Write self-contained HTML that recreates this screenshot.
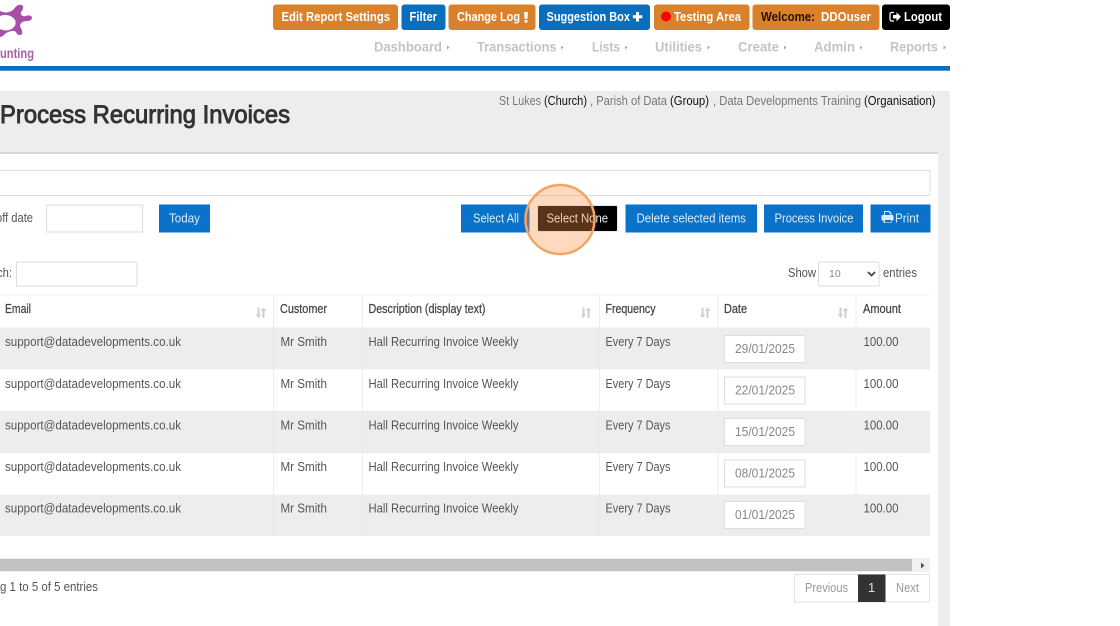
<!DOCTYPE html>
<html lang="en"><head><meta charset="utf-8"><title>Process Recurring Invoices</title>
<style>
html,body{margin:0;padding:0;background:#fff;width:1120px;height:626px;overflow:hidden}
svg{display:block;font-family:"Liberation Sans",sans-serif}
.b{font-weight:700;font-size:12.5px;fill:#fff}
.n{font-weight:700;font-size:14px;fill:#c4c4c4}
.c{font-size:12.5px;fill:#777}
.k{font-size:12.5px;fill:#111}
.w{font-size:13px;fill:#dcecf8}
.t{font-size:13px;fill:#555}
.h{font-size:12.5px;fill:#444;stroke:#444;stroke-width:.25}
.d{font-size:13px;fill:#888}
.s{fill:#cfcfcf}
</style></head><body>
<svg width="1120" height="626" viewBox="0 0 1120 626" xmlns="http://www.w3.org/2000/svg">
<rect width="1120" height="626" fill="#fff"/>
<!-- logo -->
<path fill="#a64fa6" fill-rule="evenodd" d="M0 11C6 14 11 12 14 9C16 6 18 4 22 5C24 7 23 10 21 12C20 15 23 17 26 16C28 15 30 15 32 17C32 20 30 21 27 21C23 21 20 23 20 26C21 29 23 31 22 34C20 36 17 35 16 32C14 30 10 31 6 33C4 35 2 37 0 37ZM0 16C5 14 12 15 15 20C17 24 14 29 9 30C5 31 2 30 0 29Z"/>
<text x="0" y="58" font-size="13.500" font-weight="700" fill="#a860a8" textLength="34" lengthAdjust="spacingAndGlyphs">unting</text>
<!-- top buttons -->
<g>
<rect x="273" y="4.500" width="125" height="25.500" rx="3" fill="#d9822b"/>
<rect x="401.500" y="4.500" width="44" height="25.500" rx="3" fill="#0a6ebd"/>
<rect x="448.500" y="4.500" width="87" height="25.500" rx="3" fill="#d9822b"/>
<rect x="539" y="4.500" width="111" height="25.500" rx="3" fill="#0a6ebd"/>
<rect x="654" y="4.500" width="95.500" height="25.500" rx="3" fill="#d9822b"/>
<rect x="752.500" y="4.500" width="127" height="25.500" rx="3" fill="#d9822b"/>
<rect x="882" y="4.500" width="68" height="25.500" rx="3" fill="#000"/>
<text class="b" x="281.500" y="21" textLength="108.500" lengthAdjust="spacingAndGlyphs">Edit Report Settings</text>
<text class="b" x="409.500" y="21" textLength="27.500" lengthAdjust="spacingAndGlyphs">Filter</text>
<text class="b" x="457" y="21" textLength="63" lengthAdjust="spacingAndGlyphs">Change Log</text>
<path d="M524 12h4l-.6 7h-2.800zM524.600 20h2.800v2.500h-2.800z" fill="#fff"/>
<text class="b" x="546.500" y="21" textLength="83.500" lengthAdjust="spacingAndGlyphs">Suggestion Box</text>
<path d="M637.500 12v9.500M632.800 16.700h9.500" stroke="#fff" stroke-width="3"/>
<circle cx="666" cy="16.500" r="5" fill="#f00"/>
<text class="b" x="674" y="21" textLength="67" lengthAdjust="spacingAndGlyphs">Testing Area</text>
<text class="b" x="761" y="21" textLength="54" lengthAdjust="spacingAndGlyphs" style="fill:#2a1000">Welcome:</text>
<text class="b" x="821" y="21" textLength="50" lengthAdjust="spacingAndGlyphs">DDOuser</text>
<path d="M894 12.500h-2.500a1.500 1.500 0 0 0-1.500 1.500v5.500a1.500 1.500 0 0 0 1.500 1.500h2.500" fill="none" stroke="#fff" stroke-width="1.200"/>
<path d="M893 15h3.500v-2.800l4.500 4.600-4.500 4.600v-2.900h-3.500z" fill="#fff"/>
<text class="b" x="904" y="21" textLength="38" lengthAdjust="spacingAndGlyphs">Logout</text>
</g>
<!-- nav -->
<text class="n" x="374" y="51.500" textLength="68" lengthAdjust="spacingAndGlyphs">Dashboard</text><path d="M447 45.500l2.500 2-2.500 2z" fill="#aaa"/>
<text class="n" x="477" y="51.500" textLength="79.500" lengthAdjust="spacingAndGlyphs">Transactions</text><path d="M561 45.500l2.500 2-2.500 2z" fill="#aaa"/>
<text class="n" x="592" y="51.500" textLength="28" lengthAdjust="spacingAndGlyphs">Lists</text><path d="M625 45.500l2.500 2-2.500 2z" fill="#aaa"/>
<text class="n" x="655" y="51.500" textLength="47" lengthAdjust="spacingAndGlyphs">Utilities</text><path d="M707.500 45.500l2.500 2-2.500 2z" fill="#aaa"/>
<text class="n" x="738" y="51.500" textLength="41" lengthAdjust="spacingAndGlyphs">Create</text><path d="M784 45.500l2.500 2-2.500 2z" fill="#aaa"/>
<text class="n" x="814" y="51.500" textLength="41" lengthAdjust="spacingAndGlyphs">Admin</text><path d="M860 45.500l2.500 2-2.500 2z" fill="#aaa"/>
<text class="n" x="890" y="51.500" textLength="48" lengthAdjust="spacingAndGlyphs">Reports</text><path d="M943.500 45.500l2.500 2-2.500 2z" fill="#aaa"/>
<rect x="0" y="66" width="950" height="4.700" fill="#0a6ebd"/>
<!-- page panel -->
<rect x="0" y="91" width="950" height="535" fill="#eeedee"/>
<rect x="0" y="152" width="938" height="2" fill="#d8d8d8"/>
<rect x="0" y="154" width="938" height="472" fill="#fff"/>
<text x="0" y="123" font-size="25" fill="#333" stroke="#333" stroke-width=".9" textLength="290" lengthAdjust="spacingAndGlyphs">Process Recurring Invoices</text>
<text class="c" x="499" y="105" textLength="42" lengthAdjust="spacingAndGlyphs">St Lukes</text>
<text class="k" x="544" y="105" textLength="43" lengthAdjust="spacingAndGlyphs">(Church)</text>
<text class="c" x="590" y="105" textLength="77" lengthAdjust="spacingAndGlyphs">, Parish of Data</text>
<text class="k" x="670" y="105" textLength="39" lengthAdjust="spacingAndGlyphs">(Group)</text>
<text class="c" x="713" y="105" textLength="148" lengthAdjust="spacingAndGlyphs">, Data Developments Training</text>
<text class="k" x="864" y="105" textLength="71.500" lengthAdjust="spacingAndGlyphs">(Organisation)</text>
<!-- filter controls -->
<rect x="-2" y="170.500" width="932" height="25" fill="#fff" stroke="#ddd"/>
<text class="t" x="-4" y="222" textLength="37" lengthAdjust="spacingAndGlyphs">off date</text>
<rect x="46.500" y="205" width="96" height="27" fill="#fff" stroke="#ddd"/>
<rect x="159" y="204.500" width="51" height="28" fill="#0a72c8"/>
<text class="w" x="169" y="222.500" textLength="31" lengthAdjust="spacingAndGlyphs">Today</text>
<rect x="461" y="204.500" width="68.500" height="28" fill="#0a72c8"/>
<text class="w" x="473" y="222.500" textLength="46" lengthAdjust="spacingAndGlyphs">Select All</text>
<rect x="537" y="205" width="81" height="27" fill="#d8eefc"/>
<rect x="538" y="206" width="79" height="25" rx="1" fill="#000"/>
<text class="w" x="546.500" y="222.500" textLength="61.500" lengthAdjust="spacingAndGlyphs" style="fill:#eee">Select None</text>
<rect x="625.500" y="204.500" width="131.500" height="28" fill="#0a72c8"/>
<text class="w" x="636.500" y="222.500" textLength="109.500" lengthAdjust="spacingAndGlyphs">Delete selected items</text>
<rect x="764" y="204.500" width="99" height="28" fill="#0a72c8"/>
<text class="w" x="774.500" y="222.500" textLength="79" lengthAdjust="spacingAndGlyphs">Process Invoice</text>
<rect x="870.500" y="204.500" width="60" height="28" fill="#0a72c8"/>
<path fill-rule="evenodd" d="M884 215v-3.500a.5.5 0 0 1 .5-.5h5l2 2v2h.5a1.500 1.500 0 0 1 1.500 1.500v3.500a.5.5 0 0 1-.5.5h-1.500v2.500h-8v-2.500h-1.500a.5.5 0 0 1-.5-.5v-3.500a1.500 1.500 0 0 1 1.500-1.500zM885 215h5.500v-1.500h-1.500v-1.500h-4zM885 220v2.500h6v-2.500z" fill="#dcecf8"/>
<text class="w" x="895" y="222.500" textLength="24" lengthAdjust="spacingAndGlyphs">Print</text>
<text class="t" x="-3" y="277" textLength="15" lengthAdjust="spacingAndGlyphs">ch:</text>
<rect x="16.500" y="262" width="120.500" height="24" rx="1" fill="#fff" stroke="#ddd"/>
<text class="t" x="788" y="277" textLength="28" lengthAdjust="spacingAndGlyphs">Show</text>
<rect x="818.500" y="262" width="60.500" height="24" rx="1" fill="#fff" stroke="#ddd"/>
<text x="829" y="277" font-size="10.500" fill="#888">10</text>
<path d="M868 272l3.500 3.500 3.500-3.500" fill="none" stroke="#444" stroke-width="1.700"/>
<text class="t" x="883" y="277" textLength="34" lengthAdjust="spacingAndGlyphs">entries</text>
<!-- table -->
<rect x="0" y="294.500" width="930" height="1" fill="#f2f2f2"/>
<rect x="0" y="327.500" width="930" height="42" fill="#eeedee"/>
<rect x="0" y="411" width="930" height="42" fill="#eeedee"/>
<rect x="0" y="494.500" width="930" height="41.500" fill="#eeedee"/>
<g fill="#e9e9e9" opacity=".8">
<rect x="273" y="295" width="1" height="241"/><rect x="362" y="295" width="1" height="241"/><rect x="599" y="295" width="1" height="241"/><rect x="717.500" y="295" width="1" height="241"/><rect x="855.500" y="295" width="1" height="241"/>
</g>
<text class="h" x="5" y="313" textLength="26" lengthAdjust="spacingAndGlyphs">Email</text>
<text class="h" x="280" y="313" textLength="47" lengthAdjust="spacingAndGlyphs">Customer</text>
<text class="h" x="368.500" y="313" textLength="117" lengthAdjust="spacingAndGlyphs">Description (display text)</text>
<text class="h" x="605.500" y="313" textLength="50" lengthAdjust="spacingAndGlyphs">Frequency</text>
<text class="h" x="724" y="313" textLength="23" lengthAdjust="spacingAndGlyphs">Date</text>
<text class="h" x="863" y="313" textLength="38" lengthAdjust="spacingAndGlyphs">Amount</text>
<path class="s" d="M257.500 307.500h2v7h1.800l-2.800 3.500-2.800-3.500h1.800zM262.500 318h2v-7h1.800l-2.800-3.500-2.800 3.500h1.800z"/>
<path class="s" d="M582.500 307.500h2v7h1.800l-2.800 3.500-2.800-3.500h1.800zM587.500 318h2v-7h1.800l-2.800-3.500-2.800 3.500h1.800z"/>
<path class="s" d="M701.500 307.500h2v7h1.800l-2.800 3.500-2.800-3.500h1.800zM706.500 318h2v-7h1.800l-2.800-3.500-2.800 3.500h1.800z"/>
<path class="s" d="M839.500 307.500h2v7h1.800l-2.800 3.500-2.800-3.500h1.800zM844.500 318h2v-7h1.800l-2.800-3.500-2.800 3.500h1.800z"/>
<!-- rows -->
<g>
<text class="t" x="5" y="346" textLength="176" lengthAdjust="spacingAndGlyphs">support@datadevelopments.co.uk</text>
<text class="t" x="280.500" y="346" textLength="46.500" lengthAdjust="spacingAndGlyphs">Mr Smith</text>
<text class="t" x="368.500" y="346" textLength="150" lengthAdjust="spacingAndGlyphs">Hall Recurring Invoice Weekly</text>
<text class="t" x="605.500" y="346" textLength="65" lengthAdjust="spacingAndGlyphs">Every 7 Days</text>
<rect x="724.500" y="335.500" width="80.500" height="27" fill="#fff" stroke="#ddd"/>
<text class="d" x="735" y="353" textLength="60" lengthAdjust="spacingAndGlyphs">29/01/2025</text>
<text class="t" x="863.500" y="346" textLength="35" lengthAdjust="spacingAndGlyphs">100.00</text>
</g>
<g>
<text class="t" x="5" y="388" textLength="176" lengthAdjust="spacingAndGlyphs">support@datadevelopments.co.uk</text>
<text class="t" x="280.500" y="388" textLength="46.500" lengthAdjust="spacingAndGlyphs">Mr Smith</text>
<text class="t" x="368.500" y="388" textLength="150" lengthAdjust="spacingAndGlyphs">Hall Recurring Invoice Weekly</text>
<text class="t" x="605.500" y="388" textLength="65" lengthAdjust="spacingAndGlyphs">Every 7 Days</text>
<rect x="724.500" y="377" width="80.500" height="27" fill="#fff" stroke="#ddd"/>
<text class="d" x="735" y="394.500" textLength="60" lengthAdjust="spacingAndGlyphs">22/01/2025</text>
<text class="t" x="863.500" y="388" textLength="35" lengthAdjust="spacingAndGlyphs">100.00</text>
</g>
<g>
<text class="t" x="5" y="429.500" textLength="176" lengthAdjust="spacingAndGlyphs">support@datadevelopments.co.uk</text>
<text class="t" x="280.500" y="429.500" textLength="46.500" lengthAdjust="spacingAndGlyphs">Mr Smith</text>
<text class="t" x="368.500" y="429.500" textLength="150" lengthAdjust="spacingAndGlyphs">Hall Recurring Invoice Weekly</text>
<text class="t" x="605.500" y="429.500" textLength="65" lengthAdjust="spacingAndGlyphs">Every 7 Days</text>
<rect x="724.500" y="418.500" width="80.500" height="27" fill="#fff" stroke="#ddd"/>
<text class="d" x="735" y="436" textLength="60" lengthAdjust="spacingAndGlyphs">15/01/2025</text>
<text class="t" x="863.500" y="429.500" textLength="35" lengthAdjust="spacingAndGlyphs">100.00</text>
</g>
<g>
<text class="t" x="5" y="471" textLength="176" lengthAdjust="spacingAndGlyphs">support@datadevelopments.co.uk</text>
<text class="t" x="280.500" y="471" textLength="46.500" lengthAdjust="spacingAndGlyphs">Mr Smith</text>
<text class="t" x="368.500" y="471" textLength="150" lengthAdjust="spacingAndGlyphs">Hall Recurring Invoice Weekly</text>
<text class="t" x="605.500" y="471" textLength="65" lengthAdjust="spacingAndGlyphs">Every 7 Days</text>
<rect x="724.500" y="460" width="80.500" height="27" fill="#fff" stroke="#ddd"/>
<text class="d" x="735" y="477.500" textLength="60" lengthAdjust="spacingAndGlyphs">08/01/2025</text>
<text class="t" x="863.500" y="471" textLength="35" lengthAdjust="spacingAndGlyphs">100.00</text>
</g>
<g>
<text class="t" x="5" y="512.500" textLength="176" lengthAdjust="spacingAndGlyphs">support@datadevelopments.co.uk</text>
<text class="t" x="280.500" y="512.500" textLength="46.500" lengthAdjust="spacingAndGlyphs">Mr Smith</text>
<text class="t" x="368.500" y="512.500" textLength="150" lengthAdjust="spacingAndGlyphs">Hall Recurring Invoice Weekly</text>
<text class="t" x="605.500" y="512.500" textLength="65" lengthAdjust="spacingAndGlyphs">Every 7 Days</text>
<rect x="724.500" y="501.500" width="80.500" height="27" fill="#fff" stroke="#ddd"/>
<text class="d" x="735" y="519" textLength="60" lengthAdjust="spacingAndGlyphs">01/01/2025</text>
<text class="t" x="863.500" y="512.500" textLength="35" lengthAdjust="spacingAndGlyphs">100.00</text>
</g>
<!-- scrollbar -->
<rect x="0" y="558" width="930" height="14" fill="#f1f1f1"/>
<rect x="0" y="559" width="912" height="12" fill="#c1c1c1"/>
<path d="M921 562.500l3.500 3-3.500 3z" fill="#505050"/>
<!-- footer -->
<text class="t" x="0" y="591" textLength="98" lengthAdjust="spacingAndGlyphs">g 1 to 5 of 5 entries</text>
<rect x="794.500" y="574.500" width="135" height="27.500" fill="#fff" stroke="#e2e2e2"/>
<text x="805" y="592" font-size="13" fill="#999" textLength="43" lengthAdjust="spacingAndGlyphs">Previous</text>
<rect x="858" y="574.500" width="27.500" height="27.500" fill="#333"/>
<text x="868" y="592" font-size="13" fill="#ddd">1</text>
<text x="896" y="592" font-size="13" fill="#999" textLength="23" lengthAdjust="spacingAndGlyphs">Next</text>
<!-- highlight -->
<circle cx="560" cy="219.500" r="34.500" fill="#ff9245" fill-opacity=".35" stroke="#f2a566" stroke-width="2.500"/>
</svg>
</body></html>
